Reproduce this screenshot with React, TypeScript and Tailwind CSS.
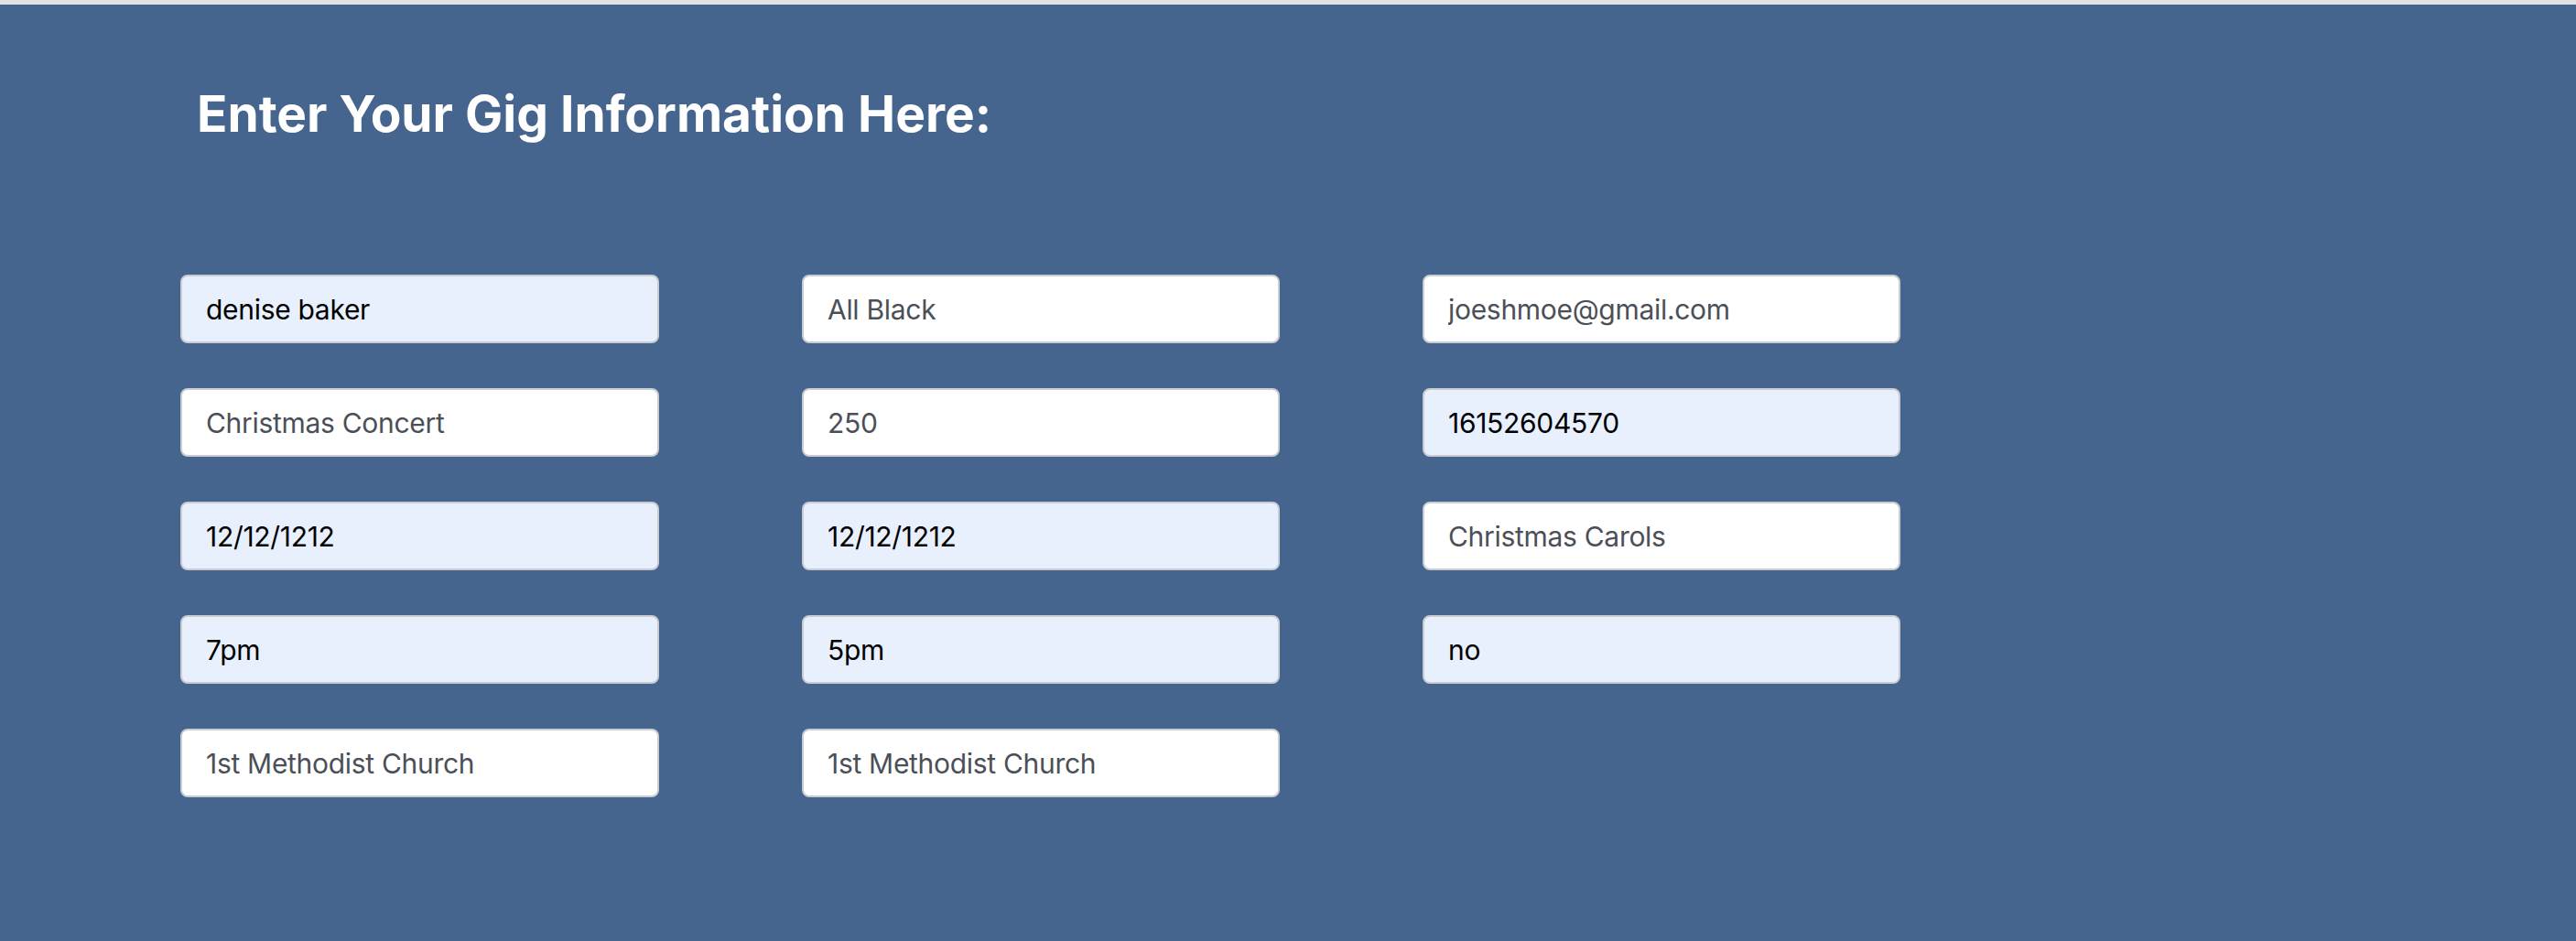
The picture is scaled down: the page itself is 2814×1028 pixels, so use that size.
import React from "react";

type Field = { value: string; filled?: boolean } | null;

// filled = browser autofill look (light blue)
const FIELDS: Field[] = [
  { value: "denise baker", filled: true },
  { value: "All Black" },
  { value: "joeshmoe@gmail.com" },
  { value: "Christmas Concert" },
  { value: "250" },
  { value: "16152604570", filled: true },
  { value: "12/12/1212", filled: true },
  { value: "12/12/1212", filled: true },
  { value: "Christmas Carols" },
  { value: "7pm", filled: true },
  { value: "5pm", filled: true },
  { value: "no", filled: true },
  { value: "1st Methodist Church" },
  { value: "1st Methodist Church" },
  null,
];

function GigInput({ field }: { field: Field }) {
  if (!field) return <div />;
  return (
    <input
      readOnly
      value={field.value}
      className={
        field.filled
          ? "h-[75px] w-full rounded-[8px] border-2 border-[#c9ccd1] bg-[#e8f0fe] px-[26px] text-[30px] tracking-[-0.3px] text-black outline-none"
          : "h-[75px] w-full rounded-[8px] border-2 border-[#c9ccd1] bg-white px-[26px] text-[30px] tracking-[-0.3px] text-[#4b5058] outline-none"
      }
      style={{ fontFamily: "Inter, 'Noto Sans', sans-serif" }}
    />
  );
}

export default function App() {
  return (
    <div
      className="min-h-[1028px] w-full border-t-[5px] border-[#e2e2e2] bg-[#45648e]"
      style={{ fontFamily: "Inter, 'Noto Sans', sans-serif" }}
    >
      <div className="pl-[215px] pt-[92px]">
        <h1 className="text-[55px] leading-none font-bold text-white">
          Enter Your Gig Information Here:
        </h1>
      </div>

      <div className="grid grid-cols-[523px_522px_522px] gap-x-[156px] gap-y-[49px] pl-[197px] pt-[148px] pb-[100px]">
        {FIELDS.map((f, i) => (
          <GigInput key={i} field={f} />
        ))}
      </div>
    </div>
  );
}
